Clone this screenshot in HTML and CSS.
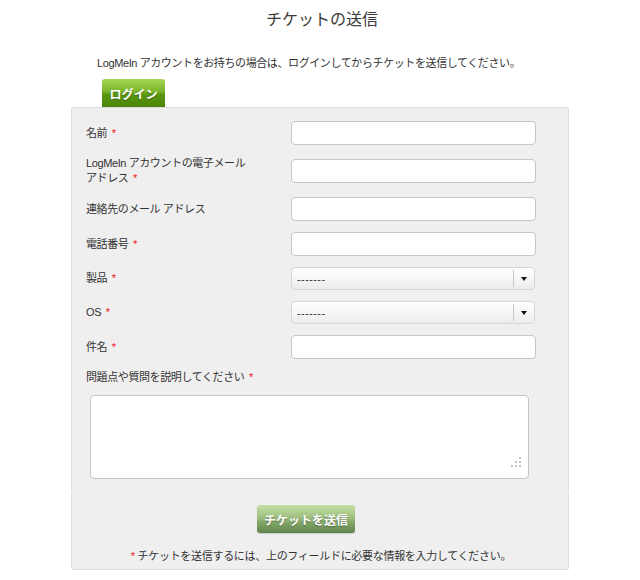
FILE: index.html
```html
<!DOCTYPE html>
<html lang="ja">
<head>
<meta charset="utf-8">
<title>チケットの送信</title>
<link rel="stylesheet" href="styles.css">
</head>
<body>
<div class="page">
  <h1 class="title">チケットの送信</h1>
  <p class="intro">LogMeIn アカウントをお持ちの場合は、ログインしてからチケットを送信してください。</p>
  <button class="login-btn">ログイン</button>
  <div class="panel-form">
    <div class="rows">
      <label class="lbl">名前 <span class="req">*</span></label>
      <input class="field" type="text">
      <label class="lbl">LogMeIn アカウントの電子メール<br>アドレス <span class="req">*</span></label>
      <input class="field" type="text">
      <label class="lbl">連絡先のメール アドレス</label>
      <input class="field" type="text">
      <label class="lbl">電話番号 <span class="req">*</span></label>
      <input class="field" type="text">
      <label class="lbl">製品 <span class="req">*</span></label>
      <div class="select"><span class="select-text">-------</span><span class="select-arrow"><span class="tri"></span></span></div>
      <label class="lbl">OS <span class="req">*</span></label>
      <div class="select"><span class="select-text">-------</span><span class="select-arrow"><span class="tri"></span></span></div>
      <label class="lbl">件名 <span class="req">*</span></label>
      <input class="field" type="text">
      <label class="lbl wide">問題点や質問を説明してください <span class="req">*</span></label>
    </div>
    <div class="ta-wrap">
      <textarea class="ta"></textarea>
      <svg class="grip" width="11" height="11" viewBox="0 0 11 11">
        <rect x="8" y="0" width="2" height="2" fill="#c4c4c4"/>
        <rect x="4" y="4" width="2" height="2" fill="#c4c4c4"/>
        <rect x="8" y="4" width="2" height="2" fill="#c4c4c4"/>
        <rect x="0" y="8" width="2" height="2" fill="#c4c4c4"/>
        <rect x="4" y="8" width="2" height="2" fill="#c4c4c4"/>
        <rect x="8" y="8" width="2" height="2" fill="#c4c4c4"/>
      </svg>
    </div>
  </div>
  <div class="panel-foot">
    <button class="submit-btn">チケットを送信</button>
    <p class="note"><span class="req">*</span> チケットを送信するには、上のフィールドに必要な情報を入力してください。</p>
  </div>
</div>
</body>
</html>
```
FILE: styles.css
```css
html, body {
  margin: 0;
  padding: 0;
  background: #ffffff;
}
body {
  font-family: "Liberation Sans", "Noto Sans CJK JP", sans-serif;
  font-size: 11px;
  color: #333333;
}
.page {
  width: 498px;
  margin: 0 auto;
}
.title {
  margin: 0;
  padding: 10px 0 0 4px;
  font-size: 16px;
  line-height: 20px;
  font-weight: normal;
  text-align: center;
  color: #3a3a3a;
}
.intro {
  margin: 25px 0 0 0;
  padding-left: 26px;
  line-height: 16px;
  letter-spacing: -0.4px;
}
.login-btn {
  display: block;
  margin: 8px 0 0 31px;
  width: 63px;
  height: 28px;
  padding: 0;
  border: 0;
  border-radius: 3px 3px 0 0;
  background: linear-gradient(#a6d554, #7ab62a 45%, #5a9612 55%, #4b8508);
  color: #ffffff;
  font-family: "Liberation Sans", "Noto Sans CJK JP", sans-serif;
  font-size: 12px;
  font-weight: bold;
  text-shadow: 0 1px 1px rgba(0, 0, 0, 0.35);
}
.panel-form {
  background: #efefef;
  border: 1px solid #dddddd;
  border-bottom: 0;
  border-radius: 3px 3px 2px 2px;
  padding: 13px 0 12px 14px;
}
.rows {
  display: grid;
  grid-template-columns: 205px 245px;
  row-gap: 11px;
  align-items: center;
}
.lbl {
  line-height: 15px;
  letter-spacing: -0.4px;
}
.lbl.wide {
  grid-column: 1 / 3;
}
.req {
  color: #ee1111;
  margin-left: 2px;
}
.field {
  box-sizing: border-box;
  width: 245px;
  height: 24px;
  margin: 0;
  border: 1px solid #c6c6c6;
  border-radius: 4px;
  background: #ffffff;
}
.select {
  box-sizing: border-box;
  width: 244px;
  height: 23px;
  display: flex;
  align-items: center;
  border: 1px solid #d6d6d6;
  border-radius: 4px;
  background: linear-gradient(#ffffff, #f6f6f6 50%, #ececec);
}
.select-text {
  flex: 1;
  padding-left: 5px;
  font-size: 11px;
  letter-spacing: 0.4px;
  color: #333333;
}
.select-arrow {
  width: 20px;
  height: 17px;
  border-left: 1px solid #c8c8c8;
  display: flex;
  align-items: center;
  justify-content: center;
}
.tri {
  width: 0;
  height: 0;
  border-left: 3px solid transparent;
  border-right: 3px solid transparent;
  border-top: 4px solid #111111;
}
.ta-wrap {
  position: relative;
  width: 439px;
  height: 84px;
  margin: 10px 0 0 4px;
}
.ta {
  box-sizing: border-box;
  display: block;
  width: 439px;
  height: 84px;
  margin: 0;
  border: 1px solid #c6c6c6;
  border-radius: 4px;
  background: #ffffff;
  resize: none;
}
.grip {
  position: absolute;
  right: 7px;
  bottom: 11px;
}
.panel-foot {
  background: #efefef;
  border: 1px solid #dddddd;
  border-top: 0;
  border-radius: 2px 2px 3px 3px;
  padding: 14px 0 5px 0;
}
.submit-btn {
  display: block;
  margin: 0 0 0 185px;
  width: 98px;
  height: 28px;
  padding: 0;
  border: 0;
  border-radius: 3px;
  background: linear-gradient(#c4dfa6, #a2c383 40%, #7fa565 65%, #62854f);
  color: #ffffff;
  font-family: "Liberation Sans", "Noto Sans CJK JP", sans-serif;
  font-size: 12px;
  font-weight: bold;
  text-shadow: 0 1px 1px rgba(0, 0, 0, 0.35);
  box-shadow: 0 1px 1px rgba(0, 0, 0, 0.15);
}
.note {
  margin: 16px 0 0 0;
  text-align: center;
  line-height: 15px;
  letter-spacing: -0.3px;
}
```
